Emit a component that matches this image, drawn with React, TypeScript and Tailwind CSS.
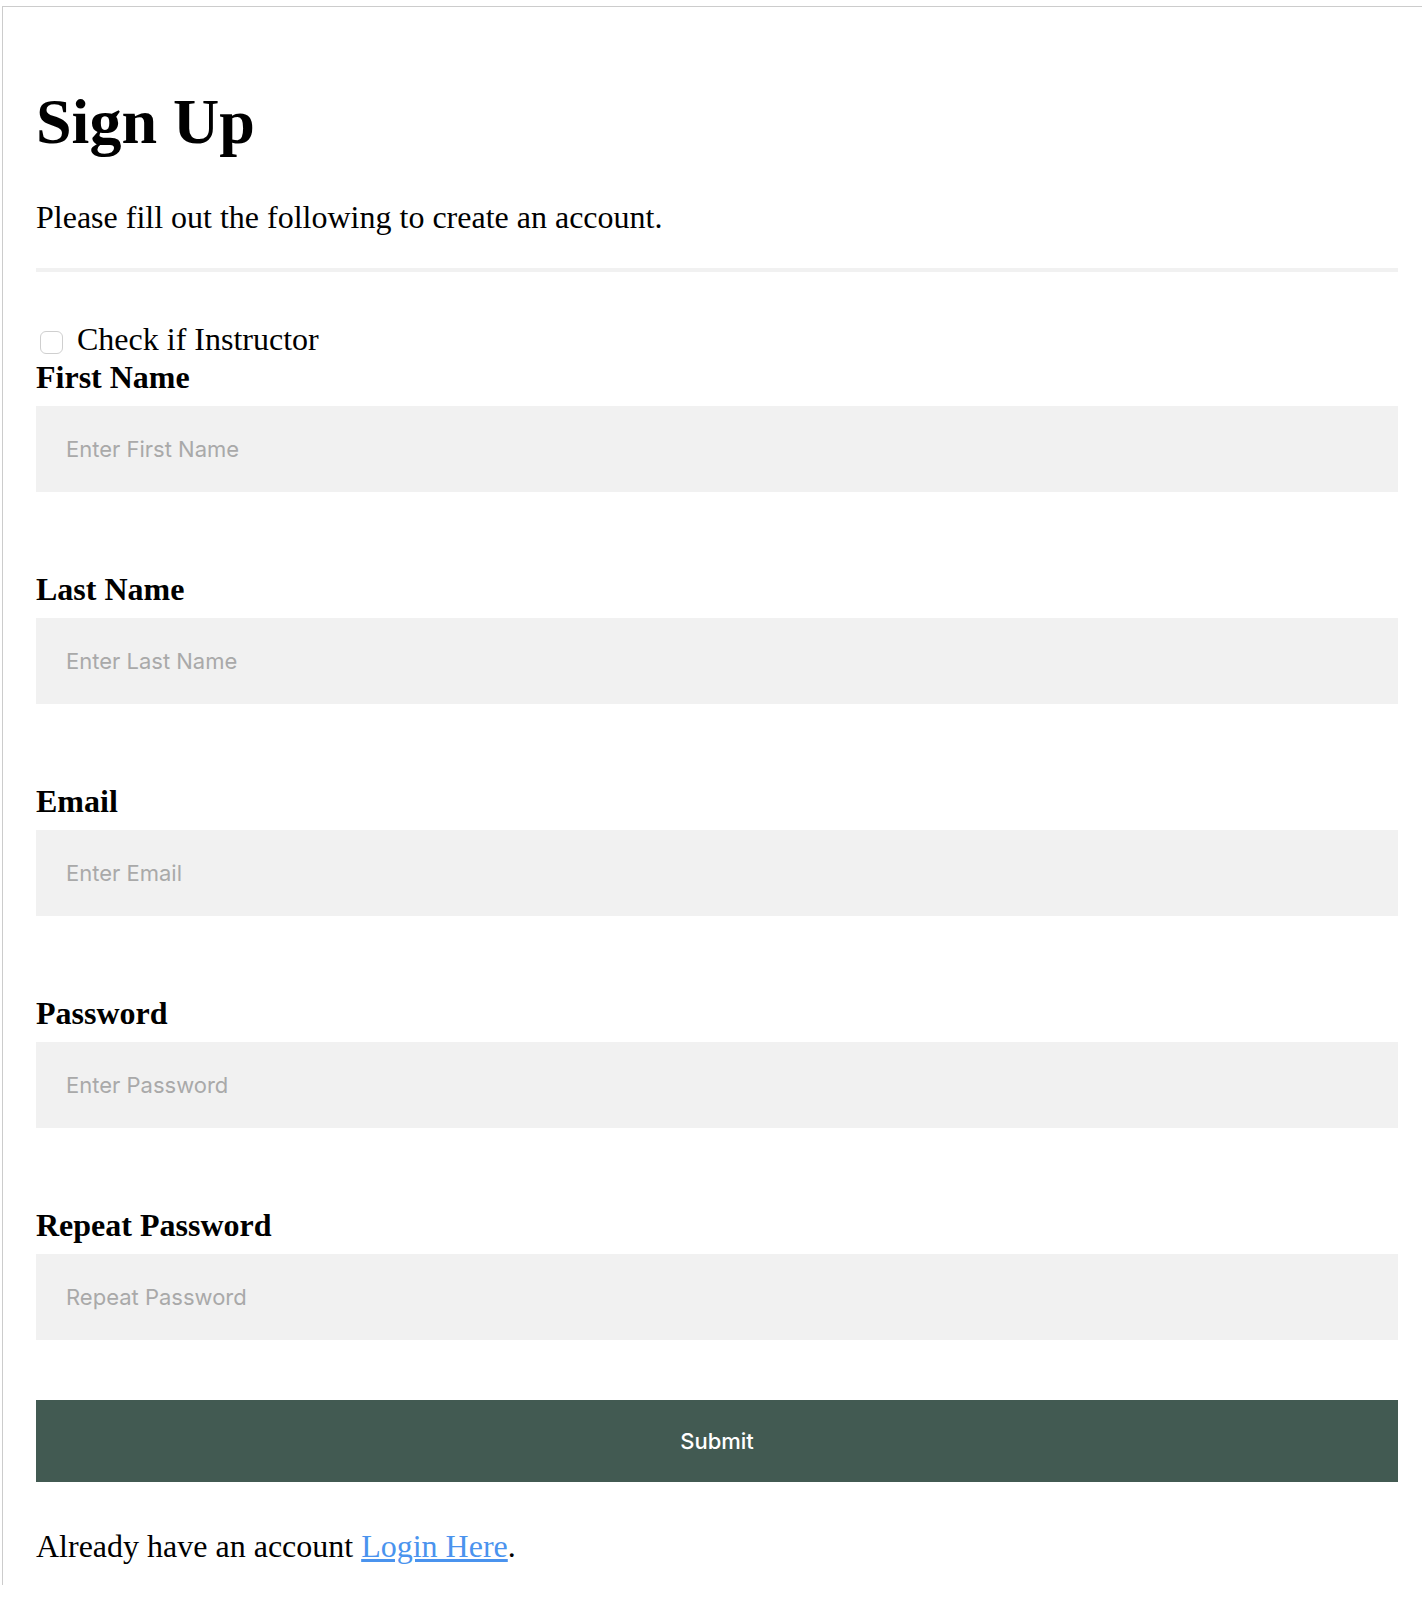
import React, { useState } from 'react';

interface Field {
  id: string;
  label: string;
  placeholder: string;
  type: string;
}

const fields: Field[] = [
  { id: 'firstName', label: 'First Name', placeholder: 'Enter First Name', type: 'text' },
  { id: 'lastName', label: 'Last Name', placeholder: 'Enter Last Name', type: 'text' },
  { id: 'email', label: 'Email', placeholder: 'Enter Email', type: 'email' },
  { id: 'password', label: 'Password', placeholder: 'Enter Password', type: 'password' },
  { id: 'repeat', label: 'Repeat Password', placeholder: 'Repeat Password', type: 'password' },
];

const App: React.FC = () => {
  const [isInstructor, setIsInstructor] = useState(false);
  const [values, setValues] = useState<Record<string, string>>({});

  return (
    <div className="min-h-screen bg-white overflow-hidden font-['Liberation_Serif',serif] text-black">
      <div className="mt-[6px] ml-[2px] border-t border-l border-[#cccccc] pl-[33px] pr-[24px] pt-[80px] pb-[20px]">
        {/* Header */}
        <h1 className="text-[64px] leading-[70px] font-bold">Sign Up</h1>
        <p className="mt-[42px] text-[32px] leading-[36px]">Please fill out the following to create an account.</p>
        <hr className="mt-[33px] border-0 h-[4px] bg-[#f1f1f1]" />

        <form onSubmit={(e) => e.preventDefault()}>
          {/* Instructor checkbox */}
          <label className="mt-[48px] flex items-center text-[32px] leading-[38px]">
            <input
              type="checkbox"
              checked={isInstructor}
              onChange={(e) => setIsInstructor(e.target.checked)}
              className="mt-[6px] ml-[4px] mr-[14px] w-[23px] h-[23px] appearance-none rounded-[6px] border border-[#cfcfcf] bg-white checked:bg-[#425a52]"
            />
            Check if Instructor
          </label>

          {/* Fields */}
          {fields.map((f, i) => (
            <div key={f.id} className={i === 0 ? '' : 'mt-[78px]'}>
              <label htmlFor={f.id} className="block text-[32px] leading-[38px] font-bold">
                {f.label}
              </label>
              <input
                id={f.id}
                type={f.type}
                value={values[f.id] || ''}
                onChange={(e) => setValues((prev) => ({ ...prev, [f.id]: e.target.value }))}
                placeholder={f.placeholder}
                className="mt-[10px] block w-full h-[86px] bg-[#f1f1f1] px-[30px] font-['Inter',sans-serif] text-[22px] text-[#333] placeholder:text-[#a9a9a9] outline-none"
              />
            </div>
          ))}

          <button
            type="submit"
            className="mt-[60px] w-full h-[82px] bg-[#425a52] text-white font-['Inter',sans-serif] text-[22px] font-medium"
          >
            Submit
          </button>
        </form>

        <p className="mt-[45px] text-[32px] leading-[38px]">
          Already have an account{' '}
          <a href="#" className="text-[#4a93ee] underline">
            Login Here
          </a>
          .
        </p>
      </div>
    </div>
  );
};

export default App;
